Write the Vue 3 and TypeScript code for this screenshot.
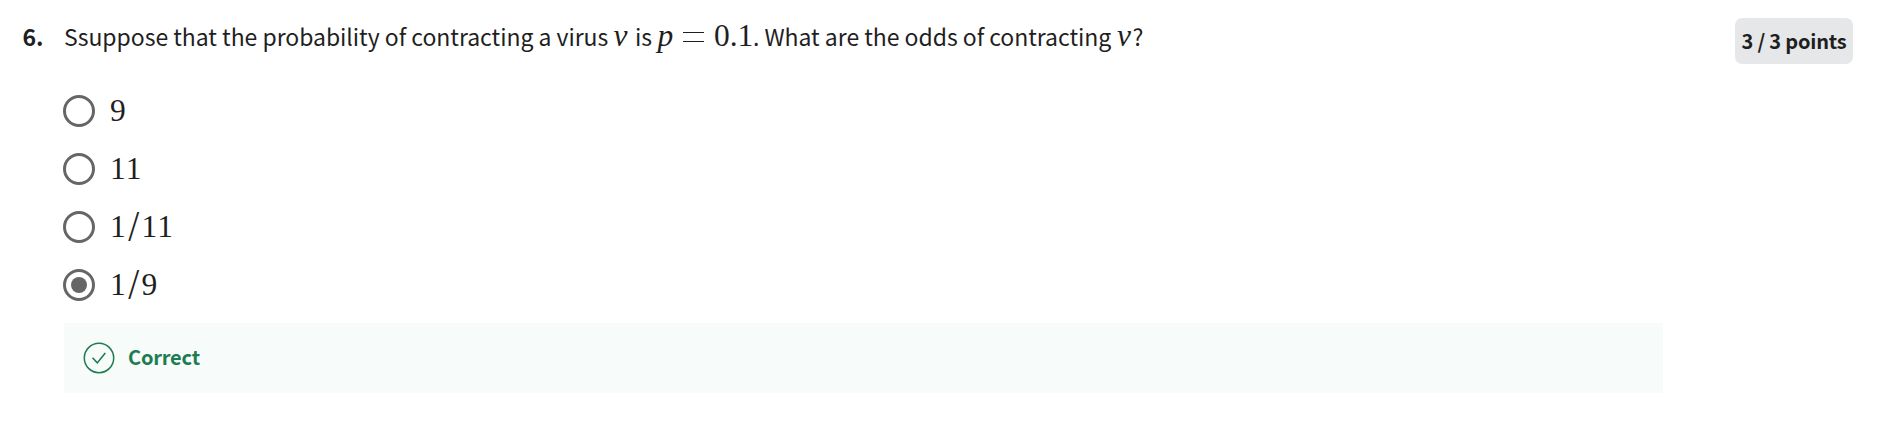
<script setup lang="ts">
interface Choice {
  label: string
  selected: boolean
}

const choices: Choice[] = [
  { label: '9', selected: false },
  { label: '11', selected: false },
  { label: '1/11', selected: false },
  { label: '1/9', selected: true },
]
</script>

<template>
  <main class="question">
    <div class="number">6.</div>
    <section class="body">
      <div class="prompt">
        <span class="lead">Ssuppose that the probability of contracting a virus</span>
        <i class="math var">v</i>
        <span class="is">is</span>
        <i class="math pvar">p</i>
        <span class="equals"></span>
        <span class="math value">0.1</span>
        <span class="tail">. What are the odds of contracting</span>
        <i class="math var last">v</i>
        <span>?</span>
      </div>
      <div class="choices">
        <div v-for="choice in choices" :key="choice.label" class="choice">
          <span class="radio"><span v-if="choice.selected" class="dot"></span></span>
          <span class="math label"><span
            v-for="(glyph, index) in choice.label"
            :key="index"
            class="glyph"
            :class="{ slash: glyph === '/' }"
          >{{ glyph }}</span></span>
        </div>
      </div>
      <div class="feedback">
        <svg class="check" viewBox="0 0 32 32" fill="none" stroke="#1d7c50">
          <circle cx="16" cy="16" r="14.7" stroke-width="1.5" />
          <path d="M9.5 15.8l4.8 5.1 8-9.9" stroke-width="1.6" />
        </svg>
        <span class="verdict">Correct</span>
      </div>
    </section>
    <div class="points">3 / 3 points</div>
  </main>
</template>

<style>
body {
  background: #fff;
}
</style>

<style scoped>
.question {
  box-sizing: border-box;
  display: flex;
  align-items: flex-start;
  width: 1878px;
  height: 446px;
  padding: 16px 25px 0 22.5px;
  color: #1f1f1f;
  font-family: "Noto Sans CJK SC", "Noto Sans", sans-serif;
  font-size: 23px;
  line-height: 40px;
  white-space: nowrap;
}
.number {
  width: 41.5px;
  font-weight: 700;
}
.body {
  width: 1599px;
}
.prompt {
  display: flex;
  align-items: baseline;
  height: 66px;
  letter-spacing: -0.04px;
}
.math {
  font-family: "Liberation Serif", serif;
  font-size: 31.5px;
}
.lead {
  width: 549.5px;
}
.var {
  width: 21.5px;
}
.is {
  width: 22.5px;
}
.pvar {
  width: 25.5px;
}
.equals {
  align-self: flex-start;
  box-sizing: border-box;
  width: 21px;
  height: 10px;
  margin: 16px 10px 0 0;
  border-top: 1.5px solid #1f1f1f;
  border-bottom: 1.5px solid #1f1f1f;
}
.value {
  width: 39px;
}
.tail {
  width: 364px;
}
.last {
  width: 15.5px;
}
.choices {
  display: flex;
  flex-direction: column;
}
.choice {
  display: flex;
  align-items: center;
  height: 58px;
}
.radio {
  box-sizing: border-box;
  display: flex;
  align-items: center;
  justify-content: center;
  width: 32px;
  height: 32px;
  margin: 0 15.5px 0 -1.4px;
  border: 3px solid #666;
  border-radius: 50%;
}
.dot {
  width: 16px;
  height: 16px;
  border-radius: 50%;
  background: #666;
}
.label {
  display: flex;
  line-height: 40px;
}
.glyph {
  width: 15.7px;
  text-align: center;
}
.slash {
  transform: scale(1.25, 1.4);
}
.feedback {
  box-sizing: border-box;
  display: flex;
  align-items: center;
  height: 70px;
  margin-top: 9px;
  padding-left: 19px;
  background: #f7fbfa;
}
.check {
  width: 32px;
  height: 32px;
  margin-right: 13px;
}
.verdict {
  margin-top: -2px;
  color: #1d7c50;
  font-size: 20px;
  font-weight: 700;
  letter-spacing: -0.18px;
}
.points {
  box-sizing: border-box;
  width: 118px;
  height: 46px;
  margin-top: 2px;
  margin-left: auto;
  border-radius: 7px;
  background: #e5e7e8;
  font-size: 20px;
  font-weight: 700;
  letter-spacing: -0.18px;
  line-height: 46px;
  text-align: center;
}
</style>
